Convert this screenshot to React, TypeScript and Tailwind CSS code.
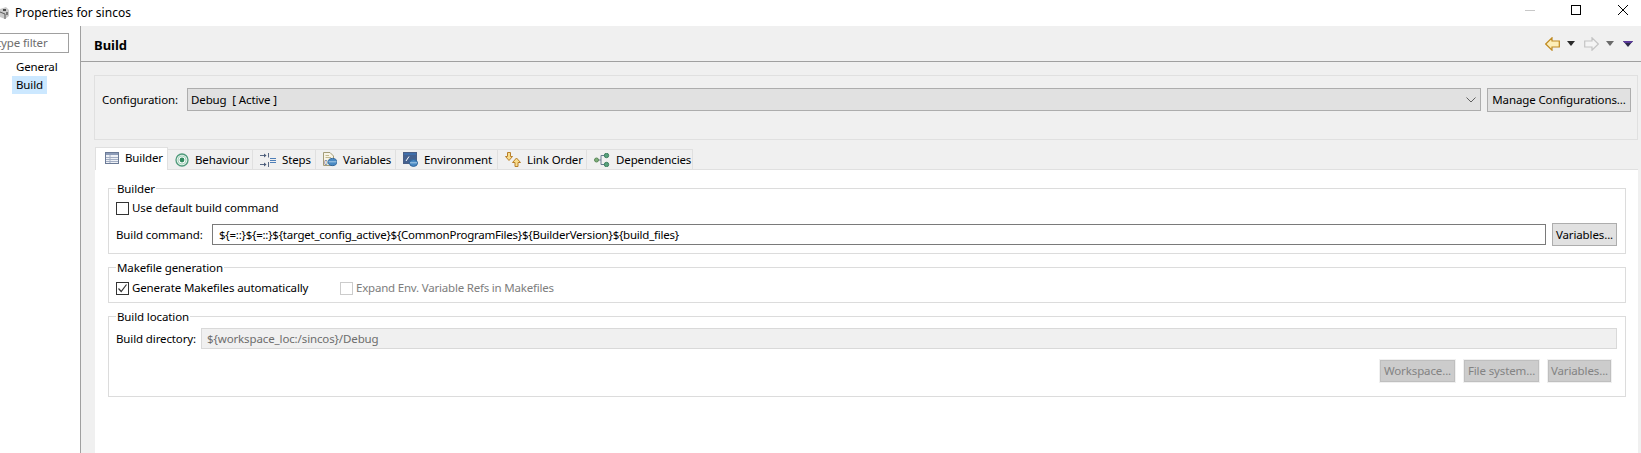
import React from "react";

const font = { fontFamily: '"Noto Sans", sans-serif' };

function Btn({ label, w, h, off }: { label: string; w: string; h: string; off?: boolean }) {
  return (
    <div
      className={
        off
          ? `${w} ${h} flex items-center justify-center bg-[#cccccc] border border-[#bfbfbf] outline-1 outline-[#f0f0f0] text-[#838383]`
          : `${w} ${h} flex items-center justify-center bg-[#e1e1e1] border border-[#adadad] text-[#000000]`
      }
    >
      {label}
    </div>
  );
}

function Check({ on, off }: { on?: boolean; off?: boolean }) {
  return (
    <div
      className={
        off
          ? "w-[13px] h-[13px] border border-[#cccccc] bg-white shrink-0"
          : "w-[13px] h-[13px] border border-[#333333] bg-white shrink-0"
      }
    >
      {on && (
        <svg viewBox="0 0 11 11" className="w-[11px] h-[11px]">
          <path d="M1.5 5.5 L4.2 8.5 L9.5 1.5" fill="none" stroke="#333" strokeWidth="1.2" />
        </svg>
      )}
    </div>
  );
}

function Group({ title, h, children }: { title: string; h: string; children: React.ReactNode }) {
  return (
    <fieldset className={`${h} border border-[#dcdcdc] pl-[7px] pr-[8px]`}>
      <legend className="px-[1px] h-[16px] leading-[16px] relative top-[1px] text-[#000000]">{title}</legend>
      {children}
    </fieldset>
  );
}

const IconBuilder = () => (
  <svg width="14" height="12" viewBox="0 0 14 12">
    <rect x="0.5" y="0.5" width="13" height="11" fill="#eef1f6" stroke="#6b7a96" />
    <rect x="1" y="1" width="12" height="2" fill="#8d9cb8" />
    <path d="M1 5.5H13M1 7.5H13M1 9.5H13M5 3V11" stroke="#a3aec4" strokeWidth="1" />
  </svg>
);
const IconBehaviour = () => (
  <svg width="14" height="14" viewBox="0 0 14 14">
    <circle cx="7" cy="7" r="6" fill="#e4f2ea" stroke="#4f9a7b" strokeWidth="1.3" />
    <circle cx="7" cy="7" r="4" fill="#fff" stroke="#a9d3bf" />
    <circle cx="7" cy="7" r="2.4" fill="#2f8a5e" />
  </svg>
);
const IconSteps = () => (
  <svg width="16" height="14" viewBox="0 0 16 14">
    <path d="M0 2.5H6M0 11.5H6" stroke="#5a6a85" />
    <path d="M4 0.5L6.5 2.5L4 4.5ZM4 9.5L6.5 11.5L4 13.5Z" fill="#4a5a78" />
    <path d="M8.5 0V4.5M8.5 9V14" stroke="#5a6a85" />
    <path d="M10 5.5H16M10 7.5H16M10 9.5H16" stroke="#4f7fb8" />
  </svg>
);
const IconVariables = () => (
  <svg width="14" height="15" viewBox="0 0 14 15">
    <path d="M0.5 0.5H7L10.5 4V13.5H0.5Z" fill="#f8f4e6" stroke="#a39c78" />
    <path d="M2.5 3.5H6M2.5 5.5H8" stroke="#c2b98e" />
    <text x="1" y="13" fontSize="6.5" fill="#3b5c8d" fontFamily="Liberation Sans">0</text>
    <ellipse cx="9.5" cy="10" rx="4.3" ry="3.6" fill="#4a8ac4" stroke="#31669a" />
    <path d="M5.5 9.8H13.5" stroke="#a9cce8" />
  </svg>
);
const IconEnv = () => (
  <svg width="15" height="15" viewBox="0 0 15 15">
    <rect x="0.5" y="0.5" width="13" height="11" fill="#eef1f6" stroke="#4a5f86" />
    <rect x="1" y="1" width="12" height="2" fill="#3f6eaa" />
    <rect x="1" y="3" width="12" height="8" fill="#44618f" />
    <path d="M3 9L6 4.5" stroke="#fff" />
    <ellipse cx="10.5" cy="11" rx="4" ry="3.4" fill="#4a8ac4" stroke="#31669a" />
    <path d="M7 10.8H14" stroke="#a9cce8" />
  </svg>
);
const IconLink = () => (
  <svg width="16" height="15" viewBox="0 0 16 15">
    <path d="M2.5 0.5H5.5V4.5H7.5L4 8.5L0.5 4.5H2.5Z" fill="#f8dc8c" stroke="#b9802a" />
    <path d="M10 14.5H13V10.5H15.5L11.5 6L7.5 10.5H10Z" fill="#f8dc8c" stroke="#b9802a" />
  </svg>
);
const IconDeps = () => (
  <svg width="16" height="14" viewBox="0 0 16 14">
    <path d="M4 7H7M7 2.5V11.5M7 2.5H11M7 11.5H11" stroke="#6a7c92" fill="none" />
    <circle cx="2.5" cy="7" r="2" fill="#7fae7a" stroke="#5c8a5a" />
    <circle cx="12.5" cy="2.5" r="2.2" fill="#58a27c" stroke="#3f8060" />
    <circle cx="12.5" cy="11.5" r="2.2" fill="#58a27c" stroke="#3f8060" />
  </svg>
);

const tabs = [
  { label: "Behaviour", w: "w-[85px]", Icon: IconBehaviour },
  { label: "Steps", w: "w-[63px]", Icon: IconSteps },
  { label: "Variables", w: "w-[80px]", Icon: IconVariables },
  { label: "Environment", w: "w-[102px]", Icon: IconEnv },
  { label: "Link Order", w: "w-[89px]", Icon: IconLink },
  { label: "Dependencies", w: "w-[106px]", Icon: IconDeps },
];

export default function App() {
  return (
    <div
      className="w-[1641px] h-[453px] overflow-hidden bg-white flex flex-col text-[11.5px] tracking-[-0.12px] leading-[16px] text-[#000000] whitespace-nowrap"
      style={font}
    >
      {/* Title bar */}
      <div className="h-[26px] shrink-0 flex items-center justify-between">
        <div className="flex items-center gap-[6px]">
          <svg width="9" height="14" viewBox="0 0 9 14">
            <path d="M0 3L6 1L9 4V10L5 13L0 11Z" fill="#c9c9c9" />
            <path d="M0 6L5 8V13" fill="none" stroke="#5a5a5a" strokeWidth="1" />
            <rect x="3" y="3" width="3" height="2" fill="#4a4a4a" />
            <rect x="6" y="6" width="2" height="3" fill="#777" />
          </svg>
          <span className="text-[12px] tracking-normal">Properties for sincos</span>
        </div>
        <div className="flex items-center h-full">
          <svg width="46" height="26" viewBox="0 0 46 26">
            <path d="M0 10.5H10" stroke="#c8c8c8" />
          </svg>
          <svg width="46" height="26" viewBox="0 0 46 26">
            <rect x="0.5" y="5.5" width="9" height="9" fill="none" stroke="#000" />
          </svg>
          <svg width="24" height="26" viewBox="0 0 24 26">
            <path d="M1 5L11 15M11 5L1 15" stroke="#000" />
          </svg>
        </div>
      </div>

      {/* Main */}
      <div className="flex-1 flex min-h-0">
        {/* Navigation */}
        <div className="w-[81px] shrink-0 border-r border-[#a0a0a0] flex flex-col">
          <div className="mt-[7px] w-[69px] h-[20px] border-y border-r border-[#a0a0a0] overflow-hidden flex items-center text-[#6d6d6d] pl-0">
            <span className="-ml-[3px]">type filter</span>
          </div>
          <div className="mt-[5px] pl-[16px] h-[18px] flex items-center">General</div>
          <div className="ml-[12px] w-[35px] h-[18px] bg-[#cce8ff] flex items-center pl-[4px]">Build</div>
        </div>

        {/* Right pane */}
        <div className="flex-1 min-w-0 bg-[#f0f0f0] flex flex-col">
          <div className="h-[36px] shrink-0 border-b border-[#a0a0a0] flex items-center justify-between pl-[13px] pr-[8px]">
            <span className="font-bold text-[13px] tracking-normal pt-[3px]">Build</span>
            <div className="flex items-center">
              <svg width="15" height="14" viewBox="0 0 15 14">
                <path d="M0.7 7L7 0.8V4H14.3V10H7V13.2Z" fill="#fdeeb8" stroke="#c08a20" strokeWidth="1.2" />
              </svg>
              <svg className="ml-[7px]" width="8" height="5" viewBox="0 0 8 5">
                <path d="M0 0H8L4 5Z" fill="#2a2a2a" />
              </svg>
              <svg className="ml-[9px]" width="15" height="14" viewBox="0 0 15 14">
                <path d="M14.3 7L8 0.8V4H0.7V10H8V13.2Z" fill="#f4f4f4" stroke="#c4c4c4" strokeWidth="1.2" />
              </svg>
              <svg className="ml-[7px]" width="8" height="5" viewBox="0 0 8 5">
                <path d="M0 0H8L4 5Z" fill="#6a6a6a" />
              </svg>
              <svg className="ml-[9px]" width="10" height="6" viewBox="0 0 10 6">
                <path d="M0 0H10L5 6Z" fill="#2c2a4a" />
                <path d="M0 0H10L8.5 2H1.5Z" fill="#5b3a9a" />
              </svg>
            </div>
          </div>

          <div className="flex-1 min-h-0 flex flex-col pl-[13px] pr-[3px] pt-[13px]">
            {/* Configuration */}
            <div className="h-[65px] shrink-0 border border-[#e0e0e0] flex items-start pt-[12px] pl-[7px] pr-[6px]">
              <span className="h-[24px] flex items-center w-[85px] shrink-0">Configuration:</span>
              <div className="flex-1 h-[23px] bg-[#e1e1e1] border border-[#adadad] flex items-center justify-between pl-[3px] pr-[4px]">
                <span className="whitespace-pre">Debug  [ Active ]</span>
                <svg width="10" height="6" viewBox="0 0 10 6">
                  <path d="M0.5 0.5L5 5L9.5 0.5" fill="none" stroke="#606060" />
                </svg>
              </div>
              <div className="ml-[6px]">
                <Btn label="Manage Configurations..." w="w-[144px]" h="h-[24px]" />
              </div>
            </div>

            {/* Tabs */}
            <div className="h-[29px] shrink-0 flex items-end pl-[1px]">
              <div className="w-[73px] h-[23px] bg-white border-x border-t border-[#e0e0e0] flex items-center gap-[6px] pl-[9px] relative top-[1px] pb-[2px]">
                <IconBuilder />
                <span>Builder</span>
              </div>
              {tabs.map(({ label, w, Icon }) => (
                <div
                  key={label}
                  className={`${w} h-[20px] bg-[#f0f0f0] border-r border-t border-[#e0e0e0] flex items-center pl-[7px] gap-[6px]`}
                >
                  <Icon />
                  <span>{label}</span>
                </div>
              ))}
            </div>

            {/* Tab content */}
            <div className="flex-1 min-h-0 ml-[1px] bg-white border-t border-[#e0e0e0] pl-[13px] pr-[12px] pt-[10px] flex flex-col gap-[5px]">
              <Group title="Builder" h="h-[74px]">
                <div className="flex items-center gap-[3px] h-[16px] mt-[4px]">
                  <Check />
                  <span>Use default build command</span>
                </div>
                <div className="flex items-center mt-[7px]">
                  <span className="w-[96px] shrink-0">Build command:</span>
                  <div className="flex-1 h-[21px] border border-[#7a7a7a] bg-white flex items-center pl-[6px] tracking-[-0.23px]">
                    {"${=::}${=::}${target_config_active}${CommonProgramFiles}${BuilderVersion}${build_files}"}
                  </div>
                  <div className="ml-[6px]">
                    <Btn label="Variables..." w="w-[65px]" h="h-[23px]" />
                  </div>
                </div>
              </Group>
              <Group title="Makefile generation" h="h-[44px]">
                <div className="flex items-center h-[16px] mt-[5px]">
                  <Check on />
                  <span className="ml-[3px] w-[208px]">Generate Makefiles automatically</span>
                  <Check off />
                  <span className="ml-[3px] text-[#7d7d7d] tracking-[-0.2px]">Expand Env. Variable Refs in Makefiles</span>
                </div>
              </Group>
              <Group title="Build location" h="h-[89px]">
                <div className="flex items-center mt-[4px]">
                  <span className="w-[85px] shrink-0">Build directory:</span>
                  <div className="flex-1 h-[21px] bg-[#f0f0f0] border border-[#d9d9d9] flex items-center pl-[5px] text-[#6d6d6d]">
                    {"${workspace_loc:/sincos}/Debug"}
                  </div>
                </div>
                <div className="flex justify-end gap-[9px] mt-[11px] pr-[6px]">
                  <Btn off label="Workspace..." w="w-[75px]" h="h-[22px]" />
                  <Btn off label="File system..." w="w-[75px]" h="h-[22px]" />
                  <Btn off label="Variables..." w="w-[63px]" h="h-[22px]" />
                </div>
              </Group>
            </div>
          </div>
        </div>
      </div>
    </div>
  );
}
